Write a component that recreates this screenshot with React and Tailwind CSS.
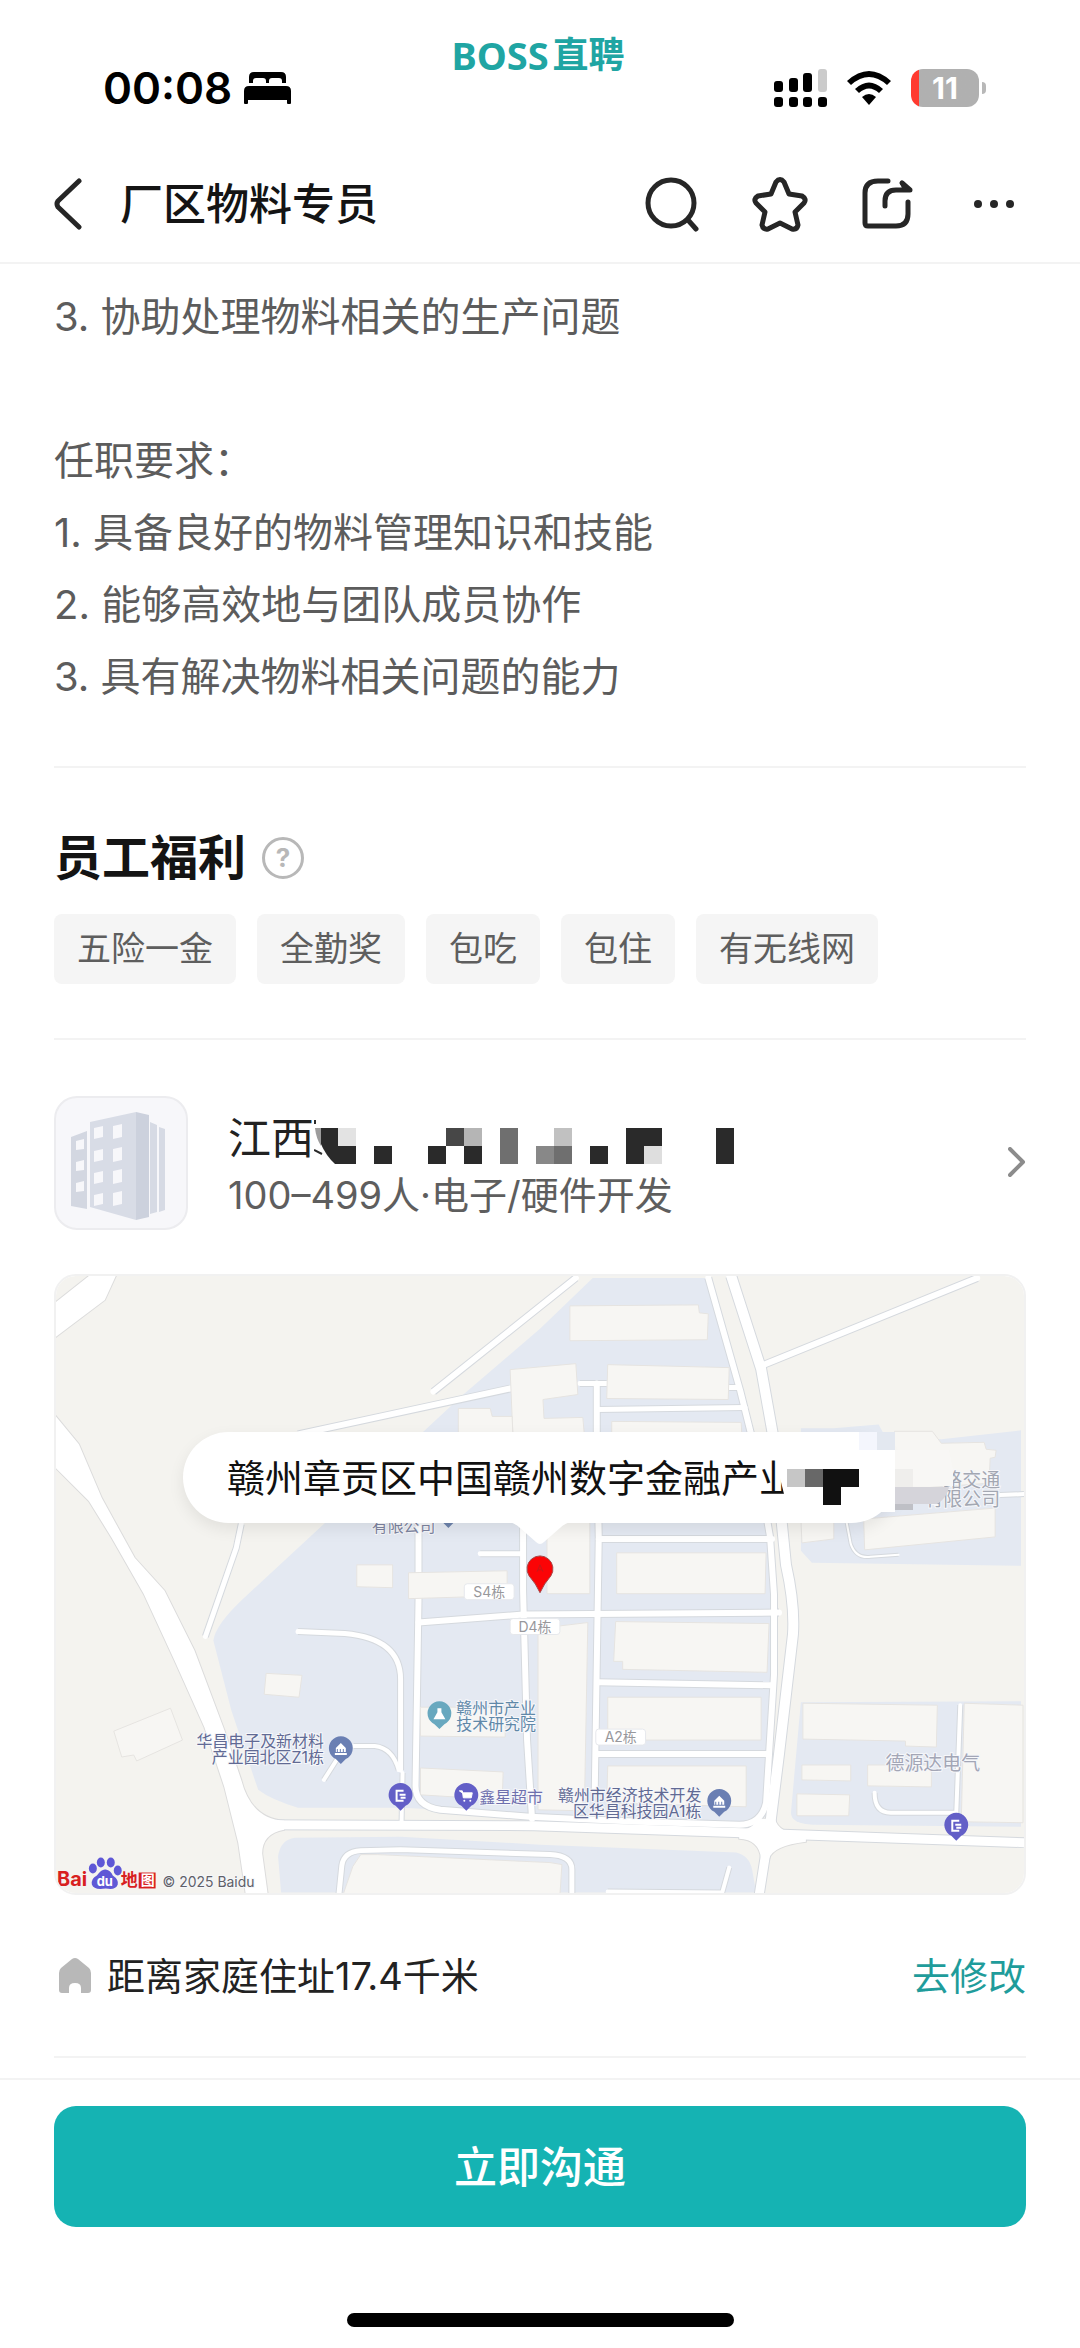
const requirements = [
    '3. 协助处理物料相关的生产问题',
    '',
    '任职要求：',
    '1. 具备良好的物料管理知识和技能',
    '2. 能够高效地与团队成员协作',
    '3. 具有解决物料相关问题的能力',
];

const benefits = ['五险一金', '全勤奖', '包吃', '包住', '有无线网'];

// hidden part of the company name: [column, row, colour] on an 18px grid
const nameBlocks = [
    [1, 0, '#e3e3e3'], [7, 0, '#474747'], [8, 0, '#b5b5b5'], [10, 0, '#6f6f6f'], [13, 0, '#c1c1c1'],
    [17, 0, '#2a2a2a'], [18, 0, '#2a2a2a'], [22, 0, '#2a2a2a'], [1, 1, '#2a2a2a'], [3, 1, '#2a2a2a'],
    [6, 1, '#2a2a2a'], [8, 1, '#2a2a2a'], [10, 1, '#6f6f6f'], [12, 1, '#888888'], [13, 1, '#6f6f6f'],
    [15, 1, '#2a2a2a'], [17, 1, '#2a2a2a'], [18, 1, '#dedede'], [22, 1, '#2a2a2a'],
];

const zones = [
    'M539 2L653 2L700 156L719 264L722 340L713 530L700 548L476 540L346 534L243 534Q216 526 203 516L176 436L158 366Q160 350 189 323L269 249L409 119L486 53Z',
    'M226 619L223 583Q225 566 240 564L346 563L486 571L683 579Q696 582 699 596L703 619Z',
    'M748 276V153L781 153L826 149L832 160L889 164L969 155V291L759 288Z',
    'M748 428L969 427V553L760 551Q738 550 738 539L746 449Z',
];

const buildings = [
    '516,30 645,29 646,37 655,38 654,64 516,65',
    '554,89 676,92 675,124 553,123',
    '456,94 522,88 524,119 489,124 490,143 529,142 531,165 459,165',
    '404,133 436,133 438,141 458,141 459,165 404,165',
    '558,146 688,147 689,165 558,165',
    '563,278 713,278 712,319 563,319',
    '493,244 536,244 536,319 493,319',
    '748,244 781,244 781,264 749,268',
    '811,244 943,233 943,262 812,275',
    '842,156 880,156 889,168 932,167 934,174 944,175 943,182 938,183 937,208 842,215',
    '302,290 338,290 338,313 302,312',
    '354,298 453,296 453,321 354,324',
    '211,399 247,401 244,423 209,420',
    '58,457 115,434 127,466 81,487 78,481 66,483',
    '366,433 451,433 451,463 366,462',
    '366,494 449,498 448,526 366,521',
    '484,354 534,348 531,513 528,537 484,536',
    '562,347 716,349 714,398 569,395 569,387 560,387',
    '554,423 708,423 708,466 554,466',
    '554,492 693,492 693,533 553,529',
    '750,429 885,431 884,473 853,472 853,467 750,465',
    '749,491 798,491 798,507 749,506',
    '744,520 797,521 796,542 744,542',
    '815,491 879,491 879,513 815,512',
    '912,429 971,431 971,549 909,548',
    '298,593 306,581 323,581 496,589 508,591 506,622 288,622',
];

// [path, width]
const roads = [
    ['M379 116L522 2', 7],
    ['M243 159L456 113', 7],
    ['M186 249L181 273L150 362', 6],
    ['M706 91L925 2', 7],
    ['M655 2L687 115L702 175L717 262L721 320L721 400L716 480L713 529Q708 551 686 551L586 548L476 543L386 536Q361 532 361 512L364 326L364 245', 7],
    ['M678 0L708 93L720 160L733 290Q742 330 740 360L726 480L716 560', 11],
    ['M200 551L480 552L716 560L972 569', 10],
    ['M717 552L706 622', 10],
    ['M469 245L469 316L473 466L478 545', 7],
    ['M364 348L469 340L726 338', 7],
    ['M526 108L553 108', 6],
    ['M543 108L543 160L545 263L541 516', 7],
    ['M543 134L692 132', 6],
    ['M676 112L686 112', 6],
    ['M545 264L719 264', 7],
    ['M544 408L719 411', 7],
    ['M543 480L716 480', 7],
    ['M426 279L469 279', 6],
    ['M243 357L290 359Q346 364 346 405L346 496', 6],
    ['M299 472L320 472Q338 474 344 496', 5],
    ['M269 506L283 484', 5],
    ['M348 499L347 548', 5],
    ['M284 622L287 592Q289 578 306 577L346 576L496 581Q518 582 518 596L518 622', 6],
    ['M554 618L669 619L676 594', 5],
    ['M794 248L798 269Q803 284 818 282L846 280', 3],
    ['M948 220L972 219', 5],
    ['M908 431L904 539L838 539Q822 539 822 519', 5],
];

const wideRoads = [
    'M0 26L33 0L60 0L49 24L0 61Z',
    'M0 141L23 169L46 223L79 283L109 316L139 376L169 456L186 506Q196 545 229 547L229 556Q207 560 207 580L213 624L191 624L183 569L169 513L149 453L119 386L88 319L56 263L33 226L0 193Z',
    'M704 545L722 545Q725 560 753 562L753 568Q720 572 716 585L708 585Q706 566 686 565L686 556Q700 556 704 545Z',
];

const tags = [
    { text: 'S4栋', x: 435, y: 317 },
    { text: 'D4栋', x: 481, y: 352 },
    { text: 'A2栋', x: 567, y: 463 },
];

const places = [
    { lines: ['有限公司'], x: 381, y: 257, anchor: 'end', fill: '#7d84a0', size: 16 },
    { lines: ['赣州市产业', '技术研究院'], x: 402, y: 440, anchor: 'start', fill: '#6088a8', size: 16 },
    { lines: ['华昌电子及新材料', '产业园北区Z1栋'], x: 269, y: 473, anchor: 'end', fill: '#616a94', size: 16 },
    { lines: ['鑫星超市'], x: 425, y: 529, anchor: 'start', fill: '#6e6fae', size: 16 },
    { lines: ['赣州市经济技术开发', '区华昌科技园A1栋'], x: 648, y: 527, anchor: 'end', fill: '#616a94', size: 16 },
    { lines: ['德源达电气'], x: 833, y: 496, anchor: 'start', fill: '#a3a6b6', size: 19 },
    { lines: ['路交通', '有限公司'], x: 948, y: 212, anchor: 'end', fill: '#a3a7b2', size: 19 },
];

function StatusBar() {
    return (
        <div className="grid h-[146px] grid-cols-[1fr_auto_1fr] items-center">
            <div className="flex items-center gap-3 pt-[30px] pl-[103px]">
                <span className="text-[44px] leading-none font-semibold text-black">00:08</span>
                <svg className="h-8 w-12" viewBox="0 0 48 32" aria-hidden="true">
                    <path d="M5 11V5Q5 0 10 0H37Q42 0 42 5V11H38V9Q38 6 35 6H28Q25 6 25 9V11H22V9Q22 6 19 6H12Q9 6 9 9V11Z" />
                    <path d="M0 31V19Q0 14 5 14H42Q47 14 47 19V31Q47 32 46 32H44Q43 32 43 31V28H4V31Q4 32 3 32H1Q0 32 0 31Z" />
                </svg>
            </div>
            <div className="flex items-center gap-1 self-start pt-[35px] pr-1 leading-10 font-bold text-[#20a5a3]">
                <span className="font-['Noto_Sans',sans-serif] text-[38px]">BOSS</span>
                <span className="text-[36px]">直聘</span>
            </div>
            <div className="flex items-center justify-end gap-5 pt-[30px] pr-[94px]">
                <svg className="h-[38px] w-[53px]" viewBox="0 0 53 38" aria-hidden="true">
                    <rect x="0" y="12" width="9" height="11" rx="3" />
                    <rect x="15" y="9" width="9" height="14" rx="3" />
                    <rect x="29" y="4" width="9" height="19" rx="3" />
                    <rect x="44" y="0" width="9" height="23" rx="3" fill="#cbcbcb" />
                    <rect x="0" y="28" width="9" height="10" rx="3" />
                    <rect x="15" y="28" width="9" height="10" rx="3" />
                    <rect x="29" y="28" width="9" height="10" rx="3" />
                    <rect x="44" y="28" width="9" height="10" rx="3" />
                </svg>
                <svg className="h-[34px] w-11" viewBox="0 0 44 34" aria-hidden="true">
                    <path d="M0 10Q22 -10 44 10L40 14Q22 -2 4 14Z" />
                    <path d="M8 18Q22 5 36 18L32 22Q22 13 12 22Z" />
                    <path d="M15 26Q22 20 29 26L22 34Z" />
                </svg>
                <div className="flex items-center gap-[3px]">
                    <div className="flex h-[38px] w-[68px] items-center justify-center rounded-[12px] bg-linear-to-r from-[#ff3b30] from-12% to-[#b0b0b0] to-12% text-[30px] font-bold text-white">
                        11
                    </div>
                    <div className="h-3 w-1 rounded-r-full bg-[#b8b8b8]" />
                </div>
            </div>
        </div>
    );
}

function Header() {
    return (
        <header className="flex h-[118px] items-center justify-between border-b-2 border-[#f3f3f3] pr-[62px] pl-[54px]">
            <div className="flex items-center gap-[38px]">
                <button type="button" aria-label="返回">
                    <svg className="h-[52px] w-7" viewBox="0 0 28 52" fill="none" stroke="#262626" strokeWidth="5" strokeLinecap="round" strokeLinejoin="round">
                        <path d="M25 3L4 23Q2 26 4 29L25 49" />
                    </svg>
                </button>
                <h1 className="text-[43px] leading-[60px] font-medium text-[#141414]">厂区物料专员</h1>
            </div>
            <div className="flex items-center gap-[52px]">
                <button type="button" aria-label="搜索">
                    <svg className="size-14" viewBox="0 0 56 56" fill="none" stroke="#262626" strokeWidth="5" strokeLinecap="round">
                        <circle cx="27" cy="27" r="23" />
                        <path d="M44 44L52 53" />
                    </svg>
                </button>
                <button type="button" aria-label="收藏">
                    <svg className="size-14" viewBox="0 0 56 56" fill="none" stroke="#262626" strokeWidth="5" strokeLinejoin="round">
                        <path d="M24 6Q28 1 32 6L37 18L50 20Q55 23 52 27L43 36L46 49Q45 54 40 53L28 47L16 53Q11 54 10 49L13 36L4 27Q1 23 6 20L19 18Z" />
                    </svg>
                </button>
                <button type="button" aria-label="分享">
                    <svg className="size-14" viewBox="0 0 56 56" fill="none" stroke="#262626" strokeWidth="5" strokeLinecap="round" strokeLinejoin="round">
                        <path d="M28 5H18Q5 5 5 17V47Q5 50 8 50H36Q48 50 48 38V26" />
                        <path d="M25 30V25Q25 14 36 14H50L42 7" />
                        <path d="M43 8L45 13" />
                    </svg>
                </button>
                <button type="button" aria-label="更多">
                    <svg className="h-14 w-[50px]" viewBox="0 0 50 56" fill="#262626">
                        <circle cx="10" cy="28" r="4" />
                        <circle cx="26" cy="28" r="4" />
                        <circle cx="42" cy="28" r="4" />
                    </svg>
                </button>
            </div>
        </header>
    );
}

function CompanyLogo() {
    return (
        <svg className="size-[134px] shrink-0" viewBox="0 0 134 134" aria-hidden="true">
            <rect x="1" y="1" width="132" height="132" rx="22" fill="#f7f7fa" stroke="#ececef" strokeWidth="2" />
            <path d="M17 41L33 35V113L17 110Z" fill="#d3d7e1" />
            <path d="M36 26L82 16V124L36 111Z" fill="#d8dce6" />
            <path d="M82 16L95 19V121L82 124Z" fill="#ccd1dd" />
            <path d="M96 26L103 29V116L96 118ZM105 31L111 33V114L105 116Z" fill="#d6dae4" />
            {[31, 54, 76, 98].map((y) => (
                <g key={y} fill="#f7f7fa">
                    <path d={`M40 ${y + 1}L49 ${y - 1}V${y + 10}L40 ${y + 12}Z`} />
                    <path d={`M59 ${y - 1}L68 ${y - 3}V${y + 10}L59 ${y + 12}Z`} />
                </g>
            ))}
            {[44, 65, 86].map((y) => (
                <path key={y} d={`M22 ${y + 1}L30 ${y - 1}V${y + 9}L22 ${y + 10}Z`} fill="#f7f7fa" />
            ))}
        </svg>
    );
}

function Company() {
    return (
        <a href="#company" className="mt-14 flex items-center gap-10">
            <CompanyLogo />
            <div className="grow pt-1">
                <div className="flex items-center text-[43px] leading-[60px] text-[#222222]">
                    江西
                    <svg className="mt-1 h-12 w-[420px]" viewBox="-6 -12 420 48" aria-hidden="true">
                        {nameBlocks.map(([col, row, fill]) => (
                            <rect key={`${col}-${row}`} x={col * 18} y={row * 18} width="18" height="18" fill={fill} />
                        ))}
                        <path d="M1 0H18V36H15Q6 28 0 14Z" fill="#2a2a2a" />
                        <path d="M-5 0H1V18Q-4 10 -5 0Z" fill="#9c9c9c" />
                        <path d="M-5 -8V-4M-6 22L2 26" stroke="#2a2a2a" strokeWidth="2" />
                    </svg>
                </div>
                <p className="text-[38px] leading-[54px] text-[#5e5e5e]">100–499人·电子/硬件开发</p>
            </div>
            <svg className="h-8 w-[18px]" viewBox="0 0 18 32" fill="none" stroke="#8c8c8c" strokeWidth="4" strokeLinecap="round" strokeLinejoin="round">
                <path d="M2 2L15 15L2 28" />
            </svg>
        </a>
    );
}

function Pin({ x, y, fill, children }) {
    return (
        <g transform={`translate(${x} ${y})`}>
            <path d="M0 15L-5 10A12 12 0 1 1 5 10Z" fill={fill} />
            {children}
        </g>
    );
}

function ChargeMark() {
    return (
        <g fill="none" stroke="#ffffff" strokeWidth="2">
            <path d="M3 -5H-4V5H3" />
            <path d="M-1 -1H5M0 2H5" />
        </g>
    );
}

function BuildingMark() {
    return <path d="M-6 4H6V6H-6ZM-5 -1L0 -6L5 -1V3H3V0H2V3H0V0H-1V3H-3V0H-4V3H-5Z" fill="#ffffff" />;
}

function MapCanvas() {
    return (
        <svg className="block w-full" viewBox="0 0 972 620" role="img" aria-label="公司位置地图">
            <rect width="972" height="622" fill="#f4f3ef" />
            {zones.map((d) => (
                <path key={d} d={d} fill="#e4e9f2" />
            ))}
            {wideRoads.map((d) => (
                <path key={d} d={d} fill="#ffffff" stroke="#dcdcdc" strokeWidth="2" />
            ))}
            <g fill="none" stroke="#d5d9de" strokeLinejoin="round">
                {roads.map(([d, width]) => (
                    <path key={d} d={d} strokeWidth={width + 1} />
                ))}
            </g>
            <g fill="none" stroke="#ffffff" strokeLinejoin="round" strokeLinecap="round">
                {roads.map(([d, width]) => (
                    <path key={d} d={d} strokeWidth={width - 1} />
                ))}
            </g>
            {wideRoads.map((d) => (
                <path key={d} d={d} fill="#ffffff" />
            ))}
            {buildings.map((points) => (
                <polygon key={points} points={points} fill="#f7f6f3" stroke="#e6e4e1" />
            ))}

            {tags.map((tag) => (
                <g key={tag.text}>
                    <rect x={tag.x - 25} y={tag.y - 8} width="50" height="16" rx="3" fill="#ffffff" stroke="#e6e8ec" />
                    <text x={tag.x} y={tag.y + 5} textAnchor="middle" fontSize="14" fill="#98989c">
                        {tag.text}
                    </text>
                </g>
            ))}
            {places.map((place) => (
                <text
                    key={place.x}
                    textAnchor={place.anchor}
                    fontSize={place.size}
                    fill={place.fill}
                    stroke="#f6f7fa"
                    strokeWidth="2"
                    paintOrder="stroke"
                >
                    {place.lines.map((line, index) => (
                        <tspan key={line} x={place.x} y={place.y + index * place.size}>
                            {line}
                        </tspan>
                    ))}
                </text>
            ))}

            <Pin x={394} y={238} fill="#6d83ac" />
            <Pin x={385} y={440} fill="#68a8bf">
                <path d="M-2 -6H2V-2L6 5H-6L-2 -2Z" fill="#ffffff" />
            </Pin>
            <Pin x={286} y={475} fill="#6a7fb3">
                <BuildingMark />
            </Pin>
            <Pin x={666} y={528} fill="#6a7fb3">
                <BuildingMark />
            </Pin>
            <Pin x={346} y={522} fill="#635fc7">
                <ChargeMark />
            </Pin>
            <Pin x={904} y={552} fill="#635fc7">
                <ChargeMark />
            </Pin>
            <Pin x={412} y={522} fill="#635fc7">
                <path d="M-7 -5H-4L-3 2H5L6 -3H-4Z" fill="#ffffff" stroke="#ffffff" />
                <circle cx="-2" cy="5" r="1" fill="#ffffff" />
                <circle cx="4" cy="5" r="1" fill="#ffffff" />
            </Pin>

            <path d="M486 318Q482 309 475 301A13 13 0 1 1 497 301Q490 309 486 318Z" fill="#fb0406" stroke="#a34a4a" />
            <path d="M483 297L486 290L489 297M484 295H488" fill="none" stroke="#c81818" />

            <text x="1" y="613" fontSize="20" fontWeight="700" fill="#d8201f">Bai</text>
            <g fill="#5f58d6">
                <ellipse cx="37" cy="595" rx="4" ry="5" />
                <ellipse cx="45" cy="589" rx="4" ry="5" />
                <ellipse cx="55" cy="589" rx="4" ry="5" />
                <ellipse cx="62" cy="597" rx="4" ry="5" />
                <path d="M36 611Q35 605 41 602Q46 595 50 596Q55 597 57 602Q63 606 62 611Q60 617 50 615Q38 617 36 611Z" />
            </g>
            <text x="49" y="613" fontSize="13" fontWeight="700" textAnchor="middle" fill="#ffffff">du</text>
            <text x="65" y="613" fontSize="17" fontWeight="700" fill="#d8201f">地</text>
            <rect x="83" y="599" width="17" height="16" fill="#d8201f" />
            <text x="92" y="612" fontSize="14" fontWeight="700" textAnchor="middle" fill="#ffffff">图</text>
            <text x="107" y="614" fontSize="14" fill="#5f5f68" stroke="#f6f7fa" strokeWidth="2" paintOrder="stroke">© 2025 Baidu</text>
        </svg>
    );
}

function AddressBubble() {
    return (
        <div className="absolute top-[158px] left-1/2 h-[91px] w-[714px] -translate-x-1/2 rounded-full bg-white pl-[44px] shadow-[0_6px_16px_rgba(0,0,0,0.08)]">
            <p className="text-[38px] leading-[92px] whitespace-nowrap text-[#111111]">赣州章贡区中国赣州数字金融产业</p>
            <svg className="absolute top-[90px] left-1/2 h-[23px] w-[60px] -translate-x-1/2" viewBox="0 0 60 23" aria-hidden="true">
                <path d="M0 0H60Q54 2 50 6L34 20Q30 24 26 20L10 6Q6 2 0 0Z" fill="#ffffff" />
            </svg>
            {/* pixelated end of the address, spilling over the map */}
            <svg className="absolute top-0 left-[586px] h-[91px] w-[186px]" viewBox="0 0 186 91" aria-hidden="true">
                <path d="M8 0H90V80H16V66L12 50L8 36Z" fill="#ffffff" />
                <path d="M90 0H126V80H90Z" fill="#ffffff" />
                <rect x="90" y="0" width="18" height="18" fill="#f4f6fd" />
                <rect x="108" y="0" width="18" height="18" fill="#e3e8f0" />
                <rect x="18" y="37" width="18" height="18" fill="#c6c6c6" />
                <rect x="36" y="37" width="18" height="18" fill="#686868" />
                <path d="M54 37H90V55H72V73H54Z" fill="#111111" />
                <path d="M126 18H180L184 38V54H126Z" fill="#f8f7f5" />
                <rect x="126" y="37" width="18" height="18" fill="#efeeec" />
                <path d="M126 55H180Q178 66 168 72H126Z" fill="#d5d4da" />
                <rect x="126" y="72" width="18" height="6" fill="#bfc0c6" />
            </svg>
        </div>
    );
}

export default function App() {
    return (
        <div lang="zh-CN" className="flex min-h-screen flex-col bg-white font-['Inter','Noto_Sans_CJK_SC',sans-serif]">
            <StatusBar />
            <Header />

            <main className="grow px-[54px] pt-[17px]">
                <section className="border-b-2 border-[#f3f3f3] pb-[53px] text-[40px] leading-[72px] text-[#5c5c5c]">
                    {requirements.map((line, index) => (
                        <p key={index} className="min-h-[72px]">{line}</p>
                    ))}
                </section>

                <section className="border-b-2 border-[#f3f3f3] pt-[60px] pb-[54px]">
                    <div className="flex items-center gap-4">
                        <h2 className="text-[48px] leading-[60px] font-bold text-[#141414]">员工福利</h2>
                        <button
                            type="button"
                            aria-label="福利说明"
                            className="flex size-[42px] items-center justify-center rounded-full border-3 border-[#b8b8b8] text-[26px] leading-none font-bold text-[#b8b8b8]"
                        >
                            ?
                        </button>
                    </div>
                    <ul className="mt-[26px] flex flex-wrap gap-[21px]">
                        {benefits.map((benefit) => (
                            <li key={benefit} className="rounded-lg bg-[#f5f5f5] px-[23px] text-[34px] leading-[70px] text-[#5e5e5e]">
                                {benefit}
                            </li>
                        ))}
                    </ul>
                </section>

                <Company />

                <div className="relative mt-11">
                    <div className="overflow-hidden rounded-[22px] border-2 border-[#f1f1f1]">
                        <MapCanvas />
                    </div>
                    <AddressBubble />
                </div>

                <div className="mt-[51px] flex items-center justify-between border-b-2 border-[#f3f3f3] pb-[50px] text-[38px] leading-[60px]">
                    <div className="flex items-center gap-4 text-[#222222]">
                        <svg className="ml-[5px] h-9 w-8" viewBox="0 0 32 36" fill="#b8b8b8" aria-hidden="true">
                            <path d="M13 1Q16 -1 19 1L30 10Q32 12 32 15V32Q32 35 29 35H22V30Q22 25 16 25Q10 25 10 30V35H3Q0 35 0 32V15Q0 12 2 10Z" />
                        </svg>
                        <span>距离家庭住址17.4千米</span>
                    </div>
                    <a href="#address" className="text-[#1f9c9b]">去修改</a>
                </div>
            </main>

            <footer className="mt-5 border-t-2 border-[#f3f3f3] px-[54px] pt-[26px] pb-[21px]">
                <button type="button" className="h-[121px] w-full rounded-[22px] bg-[#15b3b3] text-[43px] font-medium text-white">
                    立即沟通
                </button>
                <div className="mx-auto mt-[86px] h-[14px] w-[387px] rounded-full bg-black" />
            </footer>
        </div>
    );
}
